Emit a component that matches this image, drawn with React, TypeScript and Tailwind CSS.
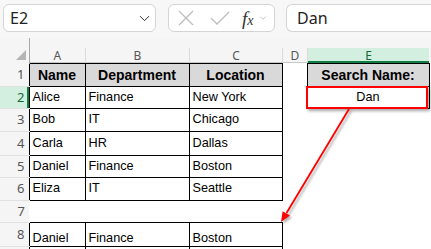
import { ChevronDown } from "lucide-react";

const ui = "font-['Noto_Sans',sans-serif]";
const cellFont = "font-['Liberation_Sans',Arial,sans-serif]";

const cols = ["A", "B", "C", "D", "E"];

const data = [
  ["Alice", "Finance", "New York"],
  ["Bob", "IT", "Chicago"],
  ["Carla", "HR", "Dallas"],
  ["Daniel", "Finance", "Boston"],
  ["Eliza", "IT", "Seattle"],
];

const rowHeights = ["h-[22px]", "h-[23px]", "h-[24px]", "h-[22px]", "h-[23px]"];

function RowHead({ n, active }: { n?: number; active?: boolean }) {
  return (
    <td
      className={`p-0 pr-[4px] text-right text-[13px] leading-none border-b border-[#e1e1e1] ${ui} ${
        active
          ? "bg-[#d3efdf] text-[#0e6b38] shadow-[inset_-2px_0_0_#107c41]"
          : "bg-[#f5f5f5] text-[#555]"
      }`}
    >
      {n}
    </td>
  );
}

function Cell({ v, bold, center }: { v?: string; bold?: boolean; center?: boolean }) {
  return (
    <td
      className={`p-0 px-[3px] border border-black whitespace-nowrap overflow-hidden leading-none text-black ${cellFont} ${
        bold ? "font-bold text-[14px] bg-[#d9d9d9]" : "text-[12.7px]"
      } ${center ? "text-center" : ""}`}
    >
      {v}
    </td>
  );
}

export default function App() {
  return (
    <div className="relative w-[431px] h-[249px] overflow-hidden bg-white">
      {/* FORMULA BAR */}
      <div className={`flex h-[38px] bg-[#f7f7f7] pl-[3px] pt-[4px] ${ui}`}>
        <div className="flex h-[28px] w-[153px] items-center justify-between rounded-[6px] border border-[#d4d4d4] bg-white pl-[6px] pr-[2px] text-[16px] text-[#222]">
          <span>E2</span>
          <ChevronDown size={17} strokeWidth={1.4} className="text-[#333]" />
        </div>
        <div className="ml-[12px] flex h-[28px] w-[107px] items-center rounded-[6px] border border-[#d4d4d4] bg-white pl-[9px]">
          <svg width="16" height="16" viewBox="0 0 16 16" className="text-[#bdbdbd]">
            <path d="M1 1L15 15M15 1L1 15" stroke="currentColor" strokeWidth="1.3" fill="none" />
          </svg>
          <svg width="20" height="14" viewBox="0 0 20 14" className="ml-[16px] text-[#bdbdbd]">
            <path d="M1 7L7 13L19 1" stroke="currentColor" strokeWidth="1.3" fill="none" />
          </svg>
          <span className="ml-[12px] font-['Liberation_Serif',serif] italic text-[19px] leading-none text-[#333]">
            f<span className="text-[14px]">x</span>
          </span>
          <ChevronDown size={10} strokeWidth={1.4} className="ml-[4px] text-[#999]" />
        </div>
        <div className="ml-[11px] flex h-[28px] flex-1 items-center rounded-l-[6px] border border-r-0 border-[#d4d4d4] bg-white pl-[10px] text-[16px] text-[#222]">
          Dan
        </div>
      </div>

      {/* SHEET */}
      <table className="table-fixed border-collapse w-[431px]">
        <colgroup>
          <col className="w-[29px]" />
          <col className="w-[56px]" />
          <col className="w-[104px]" />
          <col className="w-[93px]" />
          <col className="w-[25px]" />
          <col className="w-[122px]" />
          <col className="w-[2px]" />
        </colgroup>
        <tbody>
          <tr className="h-[25px]">
            <td className="p-0 align-bottom bg-[#f5f5f5] border-r border-[#a8a8a8]">
              <svg width="29" height="25" viewBox="0 0 29 25" className="block">
                <polygon points="26,12 26,22 16,22" fill="#b4b4b4" />
              </svg>
            </td>
            {cols.map((c) => (
              <td key={c} className="p-0 align-bottom bg-[#f5f5f5]">
                <div
                  className={`h-[15px] text-center text-[12px] leading-[15px] ${ui} ${
                    c === "E"
                      ? "bg-[#d3efdf] text-[#0e6b38] shadow-[inset_0_-2px_0_#107c41]"
                      : "text-[#555] shadow-[inset_0_-1px_0_#c8c8c8]"
                  } ${c === "A" ? "" : "border-l border-[#dadada]"}`}
                >
                  {c}
                </div>
              </td>
            ))}
            <td className="p-0 bg-[#f5f5f5]" />
          </tr>

          <tr className="h-[23px]">
            <RowHead n={1} />
            <Cell v="Name" bold center />
            <Cell v="Department" bold center />
            <Cell v="Location" bold center />
            <td className="p-0" />
            <Cell v="Search Name:" bold center />
            <td className="p-0" />
          </tr>

          {data.map((r, i) => (
            <tr key={i} className={rowHeights[i]}>
              <RowHead n={i + 2} active={i === 0} />
              <Cell v={r[0]} />
              <Cell v={r[1]} />
              <Cell v={r[2]} />
              <td className="p-0" />
              {i === 0 ? (
                <td className={`relative p-0 border border-black text-center text-[12.7px] leading-none ${cellFont}`}>
                  Dan
                  <div className="absolute left-[-2px] right-[1px] top-[-1px] bottom-[-1px] border-2 border-[#ff0000] shadow-[2px_2px_3px_rgba(0,0,0,0.35)]" />
                </td>
              ) : (
                <td className="p-0" />
              )}
              <td className="p-0" />
            </tr>
          ))}

          <tr className="h-[22px]">
            <RowHead n={7} />
            <td colSpan={6} className="p-0" />
          </tr>

          <tr className="h-[24px]">
            <RowHead n={8} />
            {["Daniel", "Finance", "Boston"].map((v) => (
              <td
                key={v}
                className={`p-0 px-[3px] pb-[1px] align-bottom border border-black text-[12.7px] leading-none ${cellFont}`}
              >
                {v}
              </td>
            ))}
            <td colSpan={3} className="p-0" />
          </tr>

          <tr className="h-[10px]">
            <RowHead />
            <td className="p-0 border border-black" />
            <td className="p-0 border border-black" />
            <td className="p-0 border border-black" />
            <td colSpan={3} className="p-0" />
          </tr>
        </tbody>
      </table>

      {/* ARROW */}
      <svg
        className="pointer-events-none absolute left-0 top-0 drop-shadow-[2px_2px_1px_rgba(0,0,0,0.3)]"
        width="431"
        height="249"
      >
        <line x1="349" y1="109" x2="286.5" y2="213" stroke="#ff0000" strokeWidth="1.8" />
        <polygon points="281,222 290,215.6 282.6,211.2" fill="#ff0000" />
      </svg>
    </div>
  );
}
